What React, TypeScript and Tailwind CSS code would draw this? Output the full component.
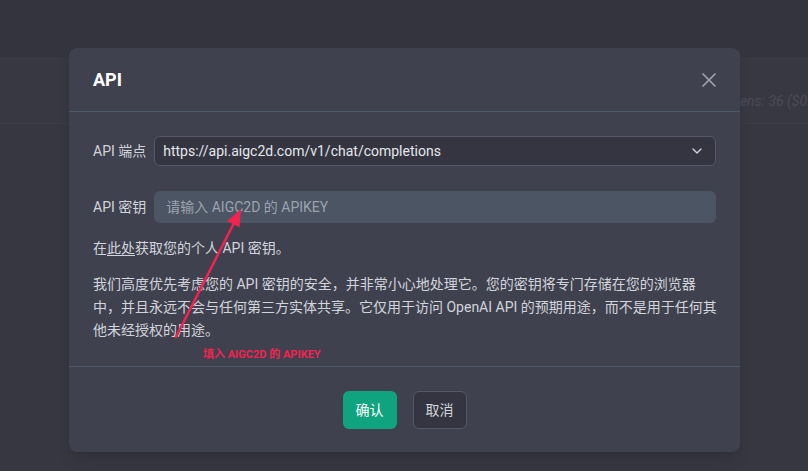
import { X, ChevronDown } from 'lucide-react';

const FONT = "font-['Roboto','Noto_Sans_CJK_SC',sans-serif]";

function Backdrop() {
  return (
    <div className="flex h-[471px] flex-col bg-[#373742]">
      <div className="h-[57px] shrink-0 bg-[#34343e]" />
      <div className="flex h-[67px] shrink-0 items-start overflow-hidden whitespace-nowrap border-b border-[#3c3c48] bg-[#383843] pl-[718px] pt-[34px]">
        <span className="text-sm italic text-[#4b4b57]">Tokens: 36 ($0.0001)</span>
      </div>
      <div className="flex-1" />
    </div>
  );
}

/** Red callout drawn over the screenshot: arrow pointing at the key input. */
function Annotation() {
  return (
    <>
      <svg className="pointer-events-none absolute left-0 top-0" width={808} height={471} aria-hidden="true">
        <line x1={176} y1={337} x2={234} y2={223} stroke="#f2234f" strokeWidth={2.5} strokeLinecap="round" />
        <polygon points="241,209 239.5,227.3 227.1,220.9" fill="#f2234f" />
      </svg>
      <div className="pointer-events-none absolute left-[203px] top-[348px] text-[11px] font-bold leading-[14px] text-[#f2234f]">
        填入 AIGC2D 的 APIKEY
      </div>
    </>
  );
}

function ApiModal() {
  return (
    <div className="w-[671px] overflow-hidden rounded-lg bg-[#40414f] shadow-lg">
      <div className="flex h-16 items-center justify-between border-b border-[#4f5868] pl-6 pr-[19px]">
        <h2 className="text-lg font-bold text-white">API</h2>
        <X size={24} strokeWidth={1.75} className="text-[#a1a1aa]" />
      </div>

      <div className="border-b border-[#4f5868] px-6 pb-6 pt-6 text-sm text-[#d1d5db]">
        <div className="flex items-center gap-2">
          <span className="shrink-0">API 端点</span>
          <div className="flex h-[30px] flex-1 items-center justify-between rounded-md border border-[#565869] bg-[#343541] pl-2 pr-2.5 text-[#e5e7eb]">
            <span>https://api.aigc2d.com/v1/chat/completions</span>
            <ChevronDown size={16} className="text-[#d1d5db]" />
          </div>
        </div>

        <div className="mt-[25px] flex items-center gap-2">
          <span className="shrink-0">API 密钥</span>
          <div className="flex h-8 flex-1 items-center rounded-md bg-[#4b5563] pl-3 text-[#9ca3af]">
            请输入 AIGC2D 的 APIKEY
          </div>
        </div>

        <p className="mt-[14px] leading-[23px]">
          在<span className="underline underline-offset-2">此处</span>获取您的个人 API 密钥。
        </p>
        {/* line breaks pinned to match the original wrapping */}
        <p className="-mr-4 mt-[13px] leading-[23px]">
          我们高度优先考虑您的 API 密钥的安全，并非常小心地处理它。您的密钥将专门存储在您的浏览器
          <br />
          中，并且永远不会与任何第三方实体共享。它仅用于访问 OpenAI API 的预期用途，而不是用于任何其
          <br />
          他未经授权的用途。
        </p>
      </div>

      <div className="flex h-[85px] items-center justify-center gap-4">
        <button type="button" className="h-[38px] w-[54px] rounded-md bg-[#10a37f] text-sm text-white">
          确认
        </button>
        <button
          type="button"
          className="h-[38px] w-[54px] rounded-md border border-[#565869] bg-[#343541] text-sm text-[#d1d5db]"
        >
          取消
        </button>
      </div>
    </div>
  );
}

export default function App() {
  return (
    <div className={`relative h-[471px] w-[808px] overflow-hidden ${FONT}`}>
      <Backdrop />
      <div className="absolute inset-0 pl-[69px] pt-[48px]">
        <ApiModal />
      </div>
      <Annotation />
    </div>
  );
}
